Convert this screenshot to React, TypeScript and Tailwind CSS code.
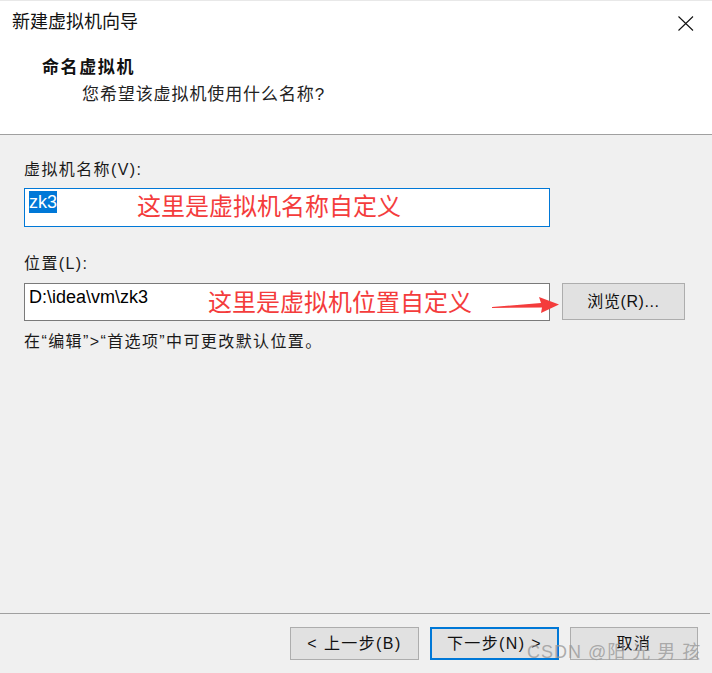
import React from "react";

const F = "font-['Liberation_Sans','Noto_Sans_CJK_SC',sans-serif]";

export default function App() {
  return (
    <div className={`relative w-[712px] h-[673px] bg-[#f0f0f0] flex flex-col overflow-hidden text-[#000] ${F}`}>
      {/* Header */}
      <div className="h-[134px] bg-white border-t border-[#e8e8e8] flex flex-col">
        <div className="flex items-start justify-between pt-[8px] pl-[12px] pr-[18px]">
          <div className="text-[18px] leading-[26px] text-[#111]">新建虚拟机向导</div>
          <svg width="16" height="15" viewBox="0 0 16 15" className="mt-[7px]">
            <path d="M0.5 0.5 L15 14.5 M15 0.5 L0.5 14.5" stroke="#111" strokeWidth="1.1" fill="none" />
          </svg>
        </div>
        <div className="pl-[42px] mt-[22px] text-[17px] leading-[22px] font-bold tracking-[1.6px] text-[#111]">命名虚拟机</div>
        <div className="pl-[82px] mt-[5px] text-[17px] leading-[22px] tracking-[0.9px] text-[#222]">您希望该虚拟机使用什么名称?</div>
      </div>
      <div className="h-px bg-[#a0a0a0]" />

      {/* Body */}
      <div className="flex-1 flex flex-col pl-[24px]">
        <div className="mt-[24px] text-[16px] leading-[22px] tracking-[1.4px] text-[#1a1a1a]">虚拟机名称(V):</div>
        <div className="mt-[7px] w-[526px] h-[39px] bg-white border border-[#0078d7] flex items-start pl-[4px] pt-[2px]">
          <span className="bg-[#0078d7] text-white text-[18px] leading-[22px]">zk3</span>
        </div>
        <div className="mt-[26px] text-[16px] leading-[22px] tracking-[1.4px] text-[#1a1a1a]">位置(L):</div>
        <div className="mt-[8px] flex items-start gap-[12px]">
          <div className="w-[526px] h-[38px] bg-white border border-[#7a7a7a] flex items-start pl-[4px] pt-[2px]">
            <span className="text-[18px] leading-[22px]">D:\idea\vm\zk3</span>
          </div>
          <div className="w-[123px] h-[37px] bg-[#e1e1e1] border border-[#adadad] flex items-center justify-center text-[16px] tracking-[0.6px] text-[#111]">
            浏览(R)...
          </div>
        </div>
        <div className="mt-[10px] text-[16px] leading-[22px] tracking-[1.4px] text-[#1a1a1a]">
          在“编辑”&gt;“首选项”中可更改默认位置。
        </div>
      </div>

      {/* Footer */}
      <div className="h-px bg-[#a0a0a0] mr-[2px]" />
      <div className="h-[59px] flex items-start justify-end pt-[13px] pr-[14px] gap-[11px]">
        <div className="w-[129px] h-[33px] bg-[#e1e1e1] border border-[#adadad] flex items-center justify-center text-[16px] tracking-[1.4px] text-[#111]">
          &lt; 上一步(B)
        </div>
        <div className="w-[129px] h-[33px] bg-[#e1e1e1] border-2 border-[#0078d7] flex items-center justify-center text-[16px] tracking-[1.4px] text-[#111]">
          下一步(N) &gt;
        </div>
        <div className="w-[128px] h-[33px] bg-[#e1e1e1] border border-[#adadad] flex items-center justify-center text-[16px] tracking-[1.4px] text-[#111]">
          取消
        </div>
      </div>

      {/* Annotations */}
      <div className="absolute left-[137px] top-[192px] text-[24px] leading-[26px] text-[#f43c3c] font-['Noto_Sans_CJK_SC',sans-serif]">
        这里是虚拟机名称自定义
      </div>
      <div className="absolute left-[208px] top-[288px] text-[24px] leading-[26px] text-[#f43c3c] font-['Noto_Sans_CJK_SC',sans-serif]">
        这里是虚拟机位置自定义
      </div>
      <svg className="absolute left-[490px] top-[295px]" width="72" height="20" viewBox="0 0 72 20">
        <polygon points="2,12 51,8 49,2 69,9.5 51,18 52,12.5 2,13" fill="#f43c3c" />
      </svg>
      <div className="absolute left-[527px] top-[640px] text-[18px] leading-[24px] text-[#9a9a9a]/80 tracking-[1px]">
        CSDN @阳 光 男 孩
      </div>
    </div>
  );
}
